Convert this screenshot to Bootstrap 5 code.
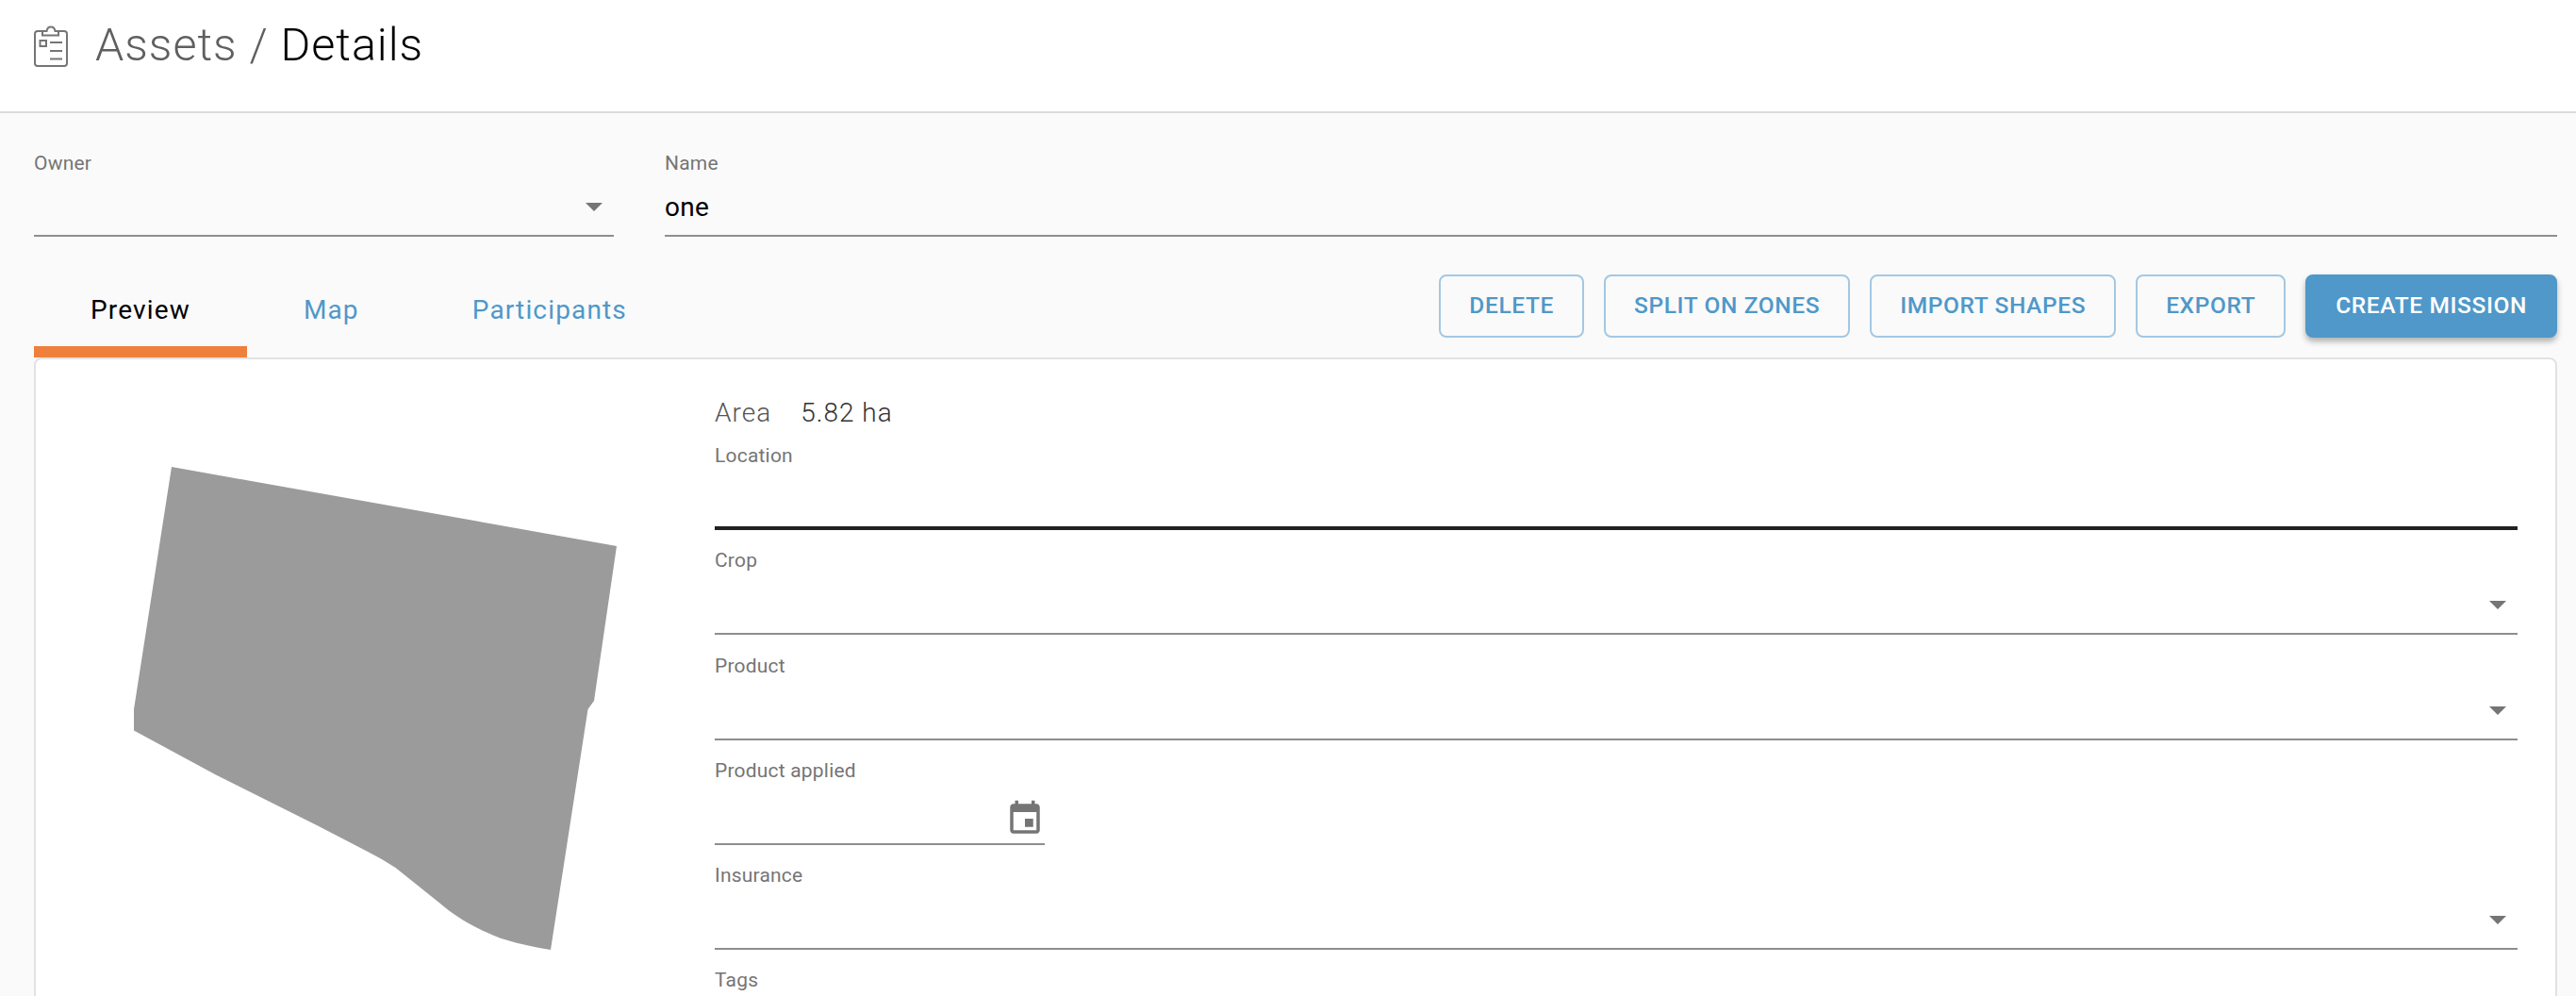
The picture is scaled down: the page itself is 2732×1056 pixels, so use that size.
<!doctype html>
<html lang="en">
<head>
<meta charset="utf-8">
<title>Assets / Details</title>
<link rel="stylesheet" href="https://cdn.jsdelivr.net/npm/bootstrap@5.3.0/dist/css/bootstrap.min.css">
<style>
html,body{height:1056px;overflow:hidden}
body{background:#fafafa;font-family:Roboto,"Liberation Sans",sans-serif;color:#000}
.top-bar{height:120px;background:#fff;border-bottom:2px solid #dcdcdc;padding:20px 36px 0;gap:29px}
.top-icon{margin-top:7px;flex:none}
.page-title{font-size:48.5px;line-height:56px;font-weight:300;margin:0;letter-spacing:.98px;color:#000}
.page-title span{color:#5f5f5f}
.main-area{padding:41px 20px 0 36px}
.field-label{display:block;font-size:21px;line-height:26px;color:#757575;margin:0;letter-spacing:.2px}
.field-box{height:66px;border-bottom:2px solid #8e8e8e;font-size:28px;line-height:33px;padding-bottom:13px;letter-spacing:.3px}
.top-fields .field-label{line-height:24px}
.top-fields .field-box{height:66px}
.owner-field{width:615px;flex:none}
.name-field{margin-left:54px}
.drop-arrow{width:0;height:0;border-left:9px solid transparent;border-right:9px solid transparent;border-top:9px solid #757575;margin:0 12px 12px 0}
.tab-row{margin-top:28px}
.tab-nav{height:100px}
.tab-nav .nav-link{height:100px;padding:31px 60px 0;font-size:28px;line-height:38px;letter-spacing:1.15px;color:#4f98c9;border-bottom:12px solid transparent}
.tab-nav .nav-link.active{color:#000;border-bottom-color:#ee803c}
.act-btn{height:67px;margin-top:12px;padding:0 30px;border-radius:8px;font-size:24.5px;font-weight:500;letter-spacing:.62px;text-transform:uppercase;color:#4f98c9;border:2px solid #a3c8e3;background:transparent}
.act-btn.act-main{background:#4f98c9;border-color:#4f98c9;color:#fff;box-shadow:0 4px 6px rgba(0,0,0,.3)}
.act-group{gap:21px}
.asset-card{height:800px;border:2px solid #e2e2e2;border-radius:8px;background:#fff;flex-direction:row}
.shape-col{width:720px;flex:none}
.shape-col svg{display:block}
.form-col{padding:40px 40px 0 0}
.area-line{font-size:28px;line-height:33px;font-weight:300;letter-spacing:1px;color:#555;margin-bottom:16px;gap:31px}
.area-line b{font-weight:300;color:#333}
.form-item{height:92px;margin-bottom:19.3px}
.form-item.focused .field-box{border-bottom:4px solid #212121}
.date-box{width:350px;padding-bottom:0}
.cal-icon{margin-bottom:5px}
</style>
</head>
<body>
<header class="top-bar d-flex align-items-start">
  <svg class="top-icon" width="36" height="44" viewBox="36 27 36 44" fill="none" stroke="#757575" stroke-width="2">
    <path d="M45 33H40a3 3 0 0 0-3 3v31a3 3 0 0 0 3 3h28a3 3 0 0 0 3-3V36a3 3 0 0 0-3-3H62"/>
    <path d="M45 37.500V33h4.500c1-6 8-6 9 0H62v4.500z"/>
    <rect x="42.500" y="43" width="6.500" height="6"/>
    <path d="M53 45h13M53 54h13M53 62.500h13"/>
  </svg>
  <h1 class="page-title"><span>Assets / </span>Details</h1>
</header>
<main class="main-area">
  <div class="top-fields d-flex">
    <div class="owner-field">
      <label class="field-label">Owner</label>
      <div class="field-box d-flex align-items-end justify-content-end"><i class="drop-arrow"></i></div>
    </div>
    <div class="name-field flex-grow-1">
      <label class="field-label">Name</label>
      <div class="field-box d-flex align-items-end">one</div>
    </div>
  </div>
  <div class="tab-row d-flex justify-content-between align-items-start">
    <nav class="nav tab-nav">
      <a class="nav-link active" href="#">Preview</a>
      <a class="nav-link" href="#">Map</a>
      <a class="nav-link" href="#">Participants</a>
    </nav>
    <div class="act-group d-flex">
      <button class="btn act-btn">Delete</button>
      <button class="btn act-btn">Split on zones</button>
      <button class="btn act-btn">Import shapes</button>
      <button class="btn act-btn">Export</button>
      <button class="btn act-btn act-main">Create mission</button>
    </div>
  </div>
  <section class="card asset-card">
    <div class="shape-col">
      <svg width="720" height="700" viewBox="38 381 720 700">
        <path fill="#9b9b9b" d="M182 495L654 579L630 743L623.500 752L584 1007C560 1003 535 998 515 988C495 979 480 969 467 958L419.500 920Q406 911 391 903.500L337 875.500L228 821L142 774.500V752Z"/>
      </svg>
    </div>
    <div class="form-col flex-grow-1">
      <div class="area-line d-flex"><span>Area</span><b>5.82 ha</b></div>
      <div class="form-item focused">
        <label class="field-label">Location</label>
        <div class="field-box"></div>
      </div>
      <div class="form-item">
        <label class="field-label">Crop</label>
        <div class="field-box d-flex align-items-end justify-content-end"><i class="drop-arrow"></i></div>
      </div>
      <div class="form-item">
        <label class="field-label">Product</label>
        <div class="field-box d-flex align-items-end justify-content-end"><i class="drop-arrow"></i></div>
      </div>
      <div class="form-item">
        <label class="field-label">Product applied</label>
        <div class="field-box date-box d-flex align-items-end justify-content-end">
          <svg class="cal-icon" width="42" height="42" viewBox="0 0 24 24" fill="#757575"><path d="M17 12h-5v5h5v-5zM16 1v2H8V1H6v2H5c-1.110 0-1.990.9-1.990 2L3 19c0 1.100.89 2 2 2h14c1.100 0 2-.9 2-2V5c0-1.100-.9-2-2-2h-1V1h-2zm3 18H5V8h14v11z"/></svg>
        </div>
      </div>
      <div class="form-item">
        <label class="field-label">Insurance</label>
        <div class="field-box d-flex align-items-end justify-content-end"><i class="drop-arrow"></i></div>
      </div>
      <div class="form-item">
        <label class="field-label">Tags</label>
        <div class="field-box"></div>
      </div>
    </div>
  </section>
</main>
<script src="https://cdn.jsdelivr.net/npm/bootstrap@5.3.0/dist/js/bootstrap.bundle.min.js"></script>
</body>
</html>
